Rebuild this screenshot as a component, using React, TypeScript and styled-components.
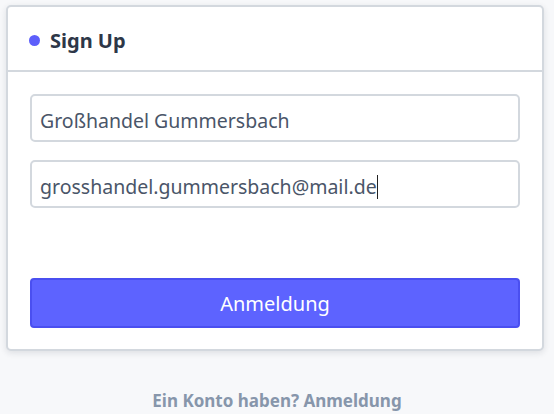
import React from "react";
import styled, { createGlobalStyle } from "styled-components";

const Global = createGlobalStyle`
  html, body { margin: 0; padding: 0; background: #f7f8fa; }
  body { font-family: "Noto Sans", "Open Sans", sans-serif; }
  * { box-sizing: border-box; }
`;

const Page = styled.div`
  padding: 5px 10px 0 6px;
  display: flex;
  flex-direction: column;
`;

const Card = styled.div`
  width: 538px;
  background: #ffffff;
  border: 2px solid #d3d8de;
  border-radius: 5px;
  box-shadow: 0 2px 6px rgba(30, 40, 60, 0.12);
`;

const Header = styled.div`
  height: 65px;
  display: flex;
  align-items: center;
  gap: 10px;
  padding: 3px 0 0 21px;
  border-bottom: 2px solid #d3d8de;
`;

const Dot = styled.span`
  width: 11px;
  height: 11px;
  border-radius: 50%;
  background: #5d5ffb;
`;

const Title = styled.h2`
  margin: 0;
  font-size: 20px;
  font-weight: 700;
  color: #2d3748;
`;

const Body = styled.div`
  padding: 22px 22px 21px 22px;
  display: flex;
  flex-direction: column;
  gap: 18px;
`;

const Input = styled.div`
  height: 48px;
  border: 2px solid #d3d8de;
  border-radius: 5px;
  display: flex;
  align-items: center;
  padding: 5px 8px 0;
  font-size: 19.5px;
  color: #4a5568;
  white-space: nowrap;
`;

const Caret = styled.span`
  display: inline-block;
  width: 1px;
  height: 24px;
  background: #222;
`;

const Button = styled.button`
  margin-top: 52px;
  height: 50px;
  width: 100%;
  background: #5d63ff;
  border: 2px solid #4a4ff0;
  border-radius: 4px;
  color: #ffffff;
  font-family: inherit;
  font-size: 20px;
`;

const Footer = styled.p`
  margin: 38px 0 0;
  text-align: center;
  font-size: 17px;
  font-weight: 700;
  color: #8796ab;
  padding-left: 4px;
`;

export default function App() {
  return (
    <>
      <Global />
      <Page>
        <Card>
          <Header>
            <Dot />
            <Title>Sign Up</Title>
          </Header>
          <Body>
            <Input>Großhandel Gummersbach</Input>
            <Input>
              grosshandel.gummersbach@mail.de
              <Caret />
            </Input>
            <Button>Anmeldung</Button>
          </Body>
        </Card>
        <Footer>Ein Konto haben? Anmeldung</Footer>
      </Page>
    </>
  );
}
